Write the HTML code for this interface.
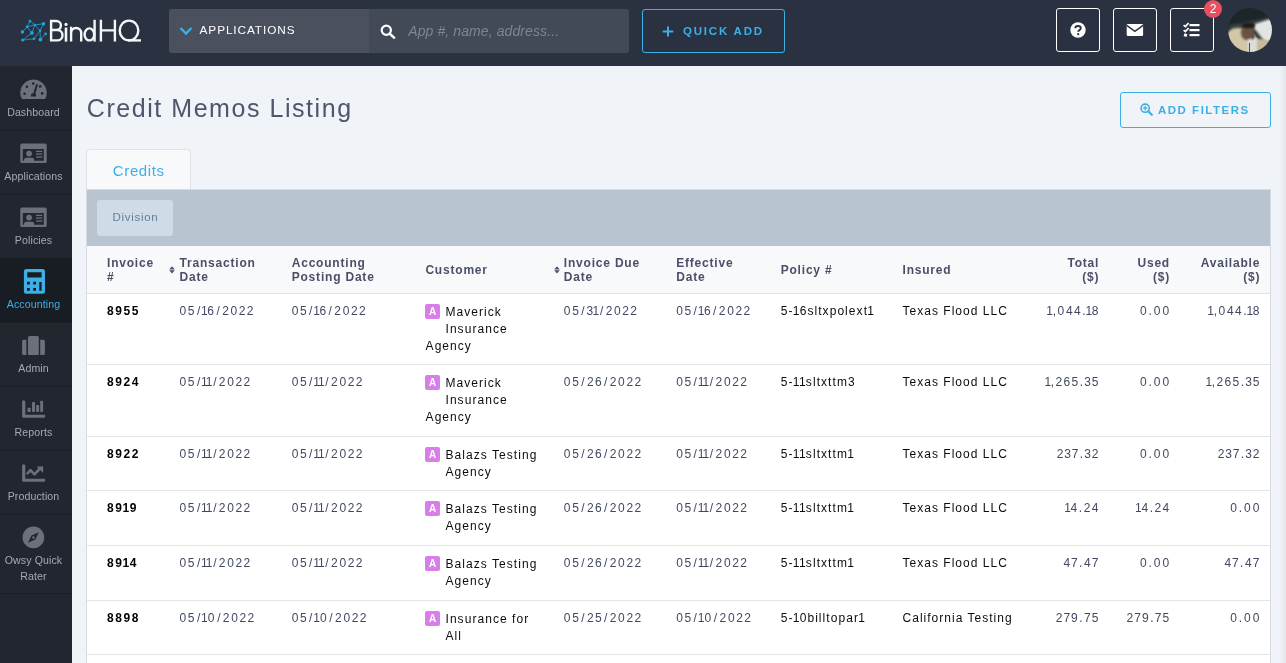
<!DOCTYPE html>
<html><head><meta charset="utf-8">
<style>
*{box-sizing:border-box;margin:0;padding:0}
html,body{width:1286px;height:663px;overflow:hidden;background:#f0f3f7;font-family:"Liberation Sans",sans-serif}
.abs{position:absolute}
.t{position:absolute;white-space:nowrap}
body{will-change:transform}
#hdr{position:absolute;left:0;top:0;width:1286px;height:66px;background:#2a3241}
#side{position:absolute;left:0;top:66px;width:72px;height:597px;background:#22272f}
</style></head><body>
<div id="hdr">
  <svg class="abs" style="left:0;top:0" width="60" height="50" viewBox="0 0 60 50">
    <g stroke="#1fa3dc" stroke-width="0.8" fill="none">
      <path d="M30 21.1 L34.9 24.9 M30 21.1 L27.1 26.8 M34.9 24.9 L43.5 23.8 M27.1 26.8 L34.9 24.9 M27.1 26.8 L22.4 32 M27.1 26.8 L31.9 32.9 M34.9 24.9 L31.9 32.9 M34.9 24.9 L40 30.8 M43.5 23.8 L40 30.8 M40 30.8 L34 38.8 M40 30.8 L40.4 39.6 M40.4 39.6 L45.6 33.9 M31.9 32.9 L22.6 40.1 M22.6 40.1 L34 38.8"/>
    </g>
    <g fill="#1fa3dc">
      <circle cx="30" cy="21.1" r="1.4"/><circle cx="43.5" cy="23.8" r="1.7"/><circle cx="34.9" cy="24.9" r="1.2"/>
      <circle cx="27.1" cy="26.8" r="1.4"/><circle cx="22.4" cy="32" r="1.7"/><circle cx="31.9" cy="32.9" r="1.9"/>
      <circle cx="40" cy="30.8" r="1.3"/><circle cx="45.6" cy="33.9" r="1.3"/><circle cx="22.6" cy="40.1" r="1.5"/>
      <circle cx="34" cy="38.8" r="1.3"/><circle cx="40.4" cy="39.6" r="1.9"/>
    </g>
  </svg>
  <svg class="abs" style="left:0;top:0" width="150" height="50" viewBox="0 0 150 50"><g stroke="#f4f6f8" stroke-width="2.4" fill="none">
<path d="M51.1 19.8 V41.6 M51.1 21 H56.4 A4.5 4.5 0 0 1 56.4 30 H51.1 M51.1 30 H57.3 A5.2 5.2 0 0 1 57.3 40.4 H50"/>
<path d="M66 27.6 V41.6" stroke-width="2.6"/>
<path d="M71.1 26.8 V41.6 M71.1 33 A5.05 5.05 0 0 1 81.2 33 V41.6"/>
<path d="M94.6 19.8 V41.6"/><ellipse cx="89.4" cy="34.4" rx="4.8" ry="6"/>
<path d="M100.9 19.8 V41.6 M114.9 19.8 V41.6 M100.9 30.4 H114.9"/>
<ellipse cx="129" cy="30.5" rx="9.3" ry="9.9"/><path d="M128 40.4 H141"/>
</g><circle cx="66" cy="24.4" r="1.6" fill="#f4f6f8"/></svg>
  <div class="abs" style="left:169px;top:9px;width:460px;height:44px;border-radius:3px;background:#434a57;overflow:hidden">
    <div class="abs" style="left:0;top:0;width:200px;height:44px;background:#4a505e"></div>
  </div>
  <svg class="abs" style="left:179px;top:26px" width="14" height="10" viewBox="0 0 14 10"><path d="M1.5 2 L7 7.5 L12.5 2" stroke="#3cb0e6" stroke-width="2.4" fill="none"/></svg>
  <div class="t" style="left:199.6px;top:25px;font-size:11.8px;line-height:11.8px;color:#fff;letter-spacing:0.9px">APPLICATIONS</div>
  <svg class="abs" style="left:380px;top:24px" width="16" height="15" viewBox="0 0 16 15"><circle cx="6.3" cy="6.3" r="4.6" stroke="#fff" stroke-width="2.2" fill="none"/><path d="M9.6 9.6 L14 13.6" stroke="#fff" stroke-width="2.6" stroke-linecap="round"/></svg>
  <div class="t" style="left:408.2px;top:23.5px;font-size:14px;line-height:14px;color:#7f8692;font-style:italic;letter-spacing:0.1px">App #, name, address...</div>
  <div class="abs" style="left:642px;top:9px;width:143px;height:44px;border:1px solid #3cb0e6;border-radius:3px"></div>
  <svg class="abs" style="left:662px;top:26px" width="12" height="11" viewBox="0 0 12 11"><path d="M6 0.5 V10.5 M0.8 5.5 H11.2" stroke="#3cb0e6" stroke-width="2"/></svg>
  <div class="t" style="left:683px;top:26px;font-size:11.5px;line-height:11.5px;font-weight:bold;color:#3cb0e6;letter-spacing:1.8px">QUICK ADD</div>
  <div class="abs" style="left:1056px;top:8px;width:44px;height:44px;border:1.5px solid #fff;border-radius:3px"></div>
  <div class="abs" style="left:1113px;top:8px;width:44px;height:44px;border:1.5px solid #fff;border-radius:3px"></div>
  <div class="abs" style="left:1170px;top:8px;width:44px;height:44px;border:1.5px solid #fff;border-radius:3px"></div>
  <svg class="abs" style="left:1070px;top:22px" width="16" height="16" viewBox="0 0 16 16"><circle cx="8" cy="8" r="7.7" fill="#fff"/><path d="M5.3 6.2 C5.3 3.2 10.8 3.2 10.8 6.2 C10.8 8 8.2 8.2 8.2 9.8" stroke="#2a3241" stroke-width="1.9" fill="none"/><circle cx="8.2" cy="12.2" r="1.1" fill="#2a3241"/></svg>
  <svg class="abs" style="left:1126px;top:23px" width="18" height="14" viewBox="0 0 18 14"><rect x="0.7" y="1" width="16.4" height="12" rx="1.2" fill="#fff"/><path d="M0.7 2.3 L8.9 8.4 L17.1 2.3" stroke="#2a3241" stroke-width="1.5" fill="none"/></svg>
  <svg class="abs" style="left:1183px;top:22px" width="18" height="16" viewBox="0 0 18 16"><path d="M0.6 3.1 L2.4 4.6 L5.6 1 M0.6 8.1 L2.4 9.6 L5.6 6" stroke="#fff" stroke-width="1.8" fill="none"/><rect x="1" y="11.6" width="3" height="3" fill="#fff" transform="rotate(20 2.5 13)"/><rect x="6.5" y="2" width="10" height="2.2" fill="#fff"/><rect x="6.5" y="7" width="10" height="2.2" fill="#fff"/><rect x="6.5" y="12" width="10" height="2.2" fill="#fff"/></svg>
  <div class="abs" style="left:1204px;top:0px;width:18.4px;height:18.4px;border-radius:50%;background:#e8505f"></div>
  <div class="t" style="left:1204px;top:3px;width:18px;text-align:center;font-size:12px;line-height:12px;color:#fff">2</div>
  <div class="abs" style="left:1227.5px;top:8.2px;width:44px;height:44px;border-radius:50%;overflow:hidden;background:#263134">
    <div class="abs" style="left:-4px;top:-2px;width:52px;height:18px;background:#1c2528;filter:blur(1.5px)"></div>
    <div class="abs" style="left:2px;top:13px;width:44px;height:5px;background:#3a4445;transform:rotate(-12deg);filter:blur(1.2px)"></div>
    <div class="abs" style="left:26px;top:13px;width:20px;height:22px;background:#e2e6e2;transform:skewY(-18deg);filter:blur(1px)"></div>
    <div class="abs" style="left:30px;top:20px;width:4px;height:22px;background:#2f3535;transform:rotate(-38deg);filter:blur(0.8px)"></div>
    <div class="abs" style="left:-3px;top:20px;width:26px;height:28px;border-radius:45% 35% 0 0;background:#d2c7a8;filter:blur(1.2px)"></div>
    <div class="abs" style="left:13.5px;top:17px;width:12.5px;height:15px;border-radius:45%;background:#6a5243;filter:blur(1px)"></div>
    <div class="abs" style="left:14px;top:15px;width:13px;height:5px;border-radius:40%;background:#1d1a19;filter:blur(0.8px)"></div>
    <div class="abs" style="left:24px;top:31px;width:18px;height:16px;border-radius:35% 45% 0 0;background:#c8bb9a;filter:blur(1px)"></div>
    <div class="abs" style="left:20px;top:31px;width:9px;height:15px;background:#dcddd8;filter:blur(0.9px)"></div>
    <div class="abs" style="left:21px;top:35px;width:1.6px;height:12px;background:#4a4a46;filter:blur(0.7px)"></div>
  </div>
</div>

<div id="side">
<div class="abs" style="left:0;top:0px;width:72px;height:65px;background:transparent;border-bottom:1px solid #1a1e25"></div>
<div class="abs" style="left:0;top:64px;width:72px;height:65px;background:transparent;border-bottom:1px solid #1a1e25"></div>
<div class="abs" style="left:0;top:128px;width:72px;height:65px;background:transparent;border-bottom:1px solid #1a1e25"></div>
<div class="abs" style="left:0;top:192px;width:72px;height:65px;background:#181c23;border-bottom:1px solid #1a1e25"></div>
<div class="abs" style="left:0;top:256px;width:72px;height:65px;background:transparent;border-bottom:1px solid #1a1e25"></div>
<div class="abs" style="left:0;top:320px;width:72px;height:65px;background:transparent;border-bottom:1px solid #1a1e25"></div>
<div class="abs" style="left:0;top:384px;width:72px;height:65px;background:transparent;border-bottom:1px solid #1a1e25"></div>
<div class="abs" style="left:0;top:448px;width:72px;height:80px;background:transparent;border-bottom:1px solid #1a1e25"></div>
</div>
<div class="t" style="top:107.45px;font-size:10.6px;line-height:10.6px;color:#a6aab0;letter-spacing:0.1px;left:0.00px;width:67px;text-align:center;">Dashboard</div>
<div class="t" style="top:171.45px;font-size:10.6px;line-height:10.6px;color:#a6aab0;letter-spacing:0.1px;left:0.00px;width:67px;text-align:center;">Applications</div>
<div class="t" style="top:235.45px;font-size:10.6px;line-height:10.6px;color:#a6aab0;letter-spacing:0.1px;left:0.00px;width:67px;text-align:center;">Policies</div>
<div class="t" style="top:299.45px;font-size:10.6px;line-height:10.6px;color:#3cb0e6;letter-spacing:0.1px;left:0.00px;width:67px;text-align:center;">Accounting</div>
<div class="t" style="top:363.45px;font-size:10.6px;line-height:10.6px;color:#a6aab0;letter-spacing:0.1px;left:0.00px;width:67px;text-align:center;">Admin</div>
<div class="t" style="top:427.45px;font-size:10.6px;line-height:10.6px;color:#a6aab0;letter-spacing:0.1px;left:0.00px;width:67px;text-align:center;">Reports</div>
<div class="t" style="top:491.45px;font-size:10.6px;line-height:10.6px;color:#a6aab0;letter-spacing:0.1px;left:0.00px;width:67px;text-align:center;">Production</div>
<div class="t" style="top:555.45px;font-size:10.6px;line-height:10.6px;color:#a6aab0;letter-spacing:0.1px;left:0.00px;width:67px;text-align:center;">Owsy Quick</div>
<div class="t" style="top:570.95px;font-size:10.6px;line-height:10.6px;color:#a6aab0;letter-spacing:0.1px;left:0.00px;width:67px;text-align:center;">Rater</div>
<svg class="abs" style="left:0;top:0" width="72" height="600" viewBox="0 0 72 600">
 <g fill="#6b7079">
  <!-- dashboard gauge -->
  <path d="M21.9 99.1 A13.25 13.25 0 1 1 45.1 99.1 Z"/>
  <!-- applications card -->
  <path fill-rule="evenodd" d="M21.8 143.6 H45.2 A1.5 1.5 0 0 1 46.7 145.1 V161.6 A1.5 1.5 0 0 1 45.2 163.1 H21.8 A1.5 1.5 0 0 1 20.3 161.6 V145.1 A1.5 1.5 0 0 1 21.8 143.6 Z M22.8 148.9 V160.8 H43.8 V148.9 Z"/>
  <circle cx="29.1" cy="153.6" r="2.9"/>
  <path d="M24.1 161 V159.8 A2 2 0 0 1 26.1 157.8 H32.1 A2 2 0 0 1 34.1 159.8 V161 Z"/>
  <rect x="36.1" y="150.7" width="6.1" height="1.3"/><rect x="36.1" y="153.4" width="6.1" height="1.3"/><rect x="36.1" y="156.4" width="6.1" height="1.3"/>
  <!-- policies card -->
  <g transform="translate(0 64)">
  <path fill-rule="evenodd" d="M21.8 143.6 H45.2 A1.5 1.5 0 0 1 46.7 145.1 V161.6 A1.5 1.5 0 0 1 45.2 163.1 H21.8 A1.5 1.5 0 0 1 20.3 161.6 V145.1 A1.5 1.5 0 0 1 21.8 143.6 Z M22.8 148.9 V160.8 H43.8 V148.9 Z"/>
  <circle cx="29.1" cy="153.6" r="2.9"/>
  <path d="M24.1 161 V159.8 A2 2 0 0 1 26.1 157.8 H32.1 A2 2 0 0 1 34.1 159.8 V161 Z"/>
  <rect x="36.1" y="150.7" width="6.1" height="1.3"/><rect x="36.1" y="153.4" width="6.1" height="1.3"/><rect x="36.1" y="156.4" width="6.1" height="1.3"/>
  </g>
  <!-- admin -->
  <path d="M29.5 335.9 H37.3 A1.5 1.5 0 0 1 38.8 337.4 V354.9 H28 V337.4 A1.5 1.5 0 0 1 29.5 335.9 Z"/>
  <path d="M23.6 339.7 H26.4 V354.9 H23.6 A1.5 1.5 0 0 1 22.1 353.4 V341.2 A1.5 1.5 0 0 1 23.6 339.7 Z"/>
  <path d="M40.2 339.7 H43.4 A1.5 1.5 0 0 1 44.9 341.2 V353.4 A1.5 1.5 0 0 1 43.4 354.9 H40.2 Z"/>
  <!-- reports -->
  <path d="M22.1 401.8 A1 1 0 0 1 25.3 401.8 V414.8 H43.9 A1.45 1.45 0 0 1 43.9 417.7 H23.6 A1.5 1.5 0 0 1 22.1 416.2 Z"/>
  <rect x="27.5" y="407.8" width="3.2" height="4.3" rx="0.8"/>
  <rect x="32" y="402.1" width="3" height="10" rx="0.8"/>
  <rect x="36.1" y="404.9" width="3" height="7.2" rx="0.8"/>
  <rect x="40.2" y="400.8" width="2.9" height="11.3" rx="0.8"/>
  <!-- production -->
  <path d="M22.1 465.8 A1 1 0 0 1 25.3 465.8 V478.8 H43.9 A1.45 1.45 0 0 1 43.9 481.7 H23.6 A1.5 1.5 0 0 1 22.1 480.2 Z"/>
  <path d="M27.5 473.4 L30.5 470.2 L34.5 474.4 L40 468.5" stroke="#6b7079" stroke-width="2.6" fill="none" stroke-linecap="round" stroke-linejoin="round"/>
  <path d="M36.6 466.6 H43.1 V472.9 Z"/>
  <!-- compass -->
  <circle cx="33.4" cy="537.4" r="10.85"/>
 </g>
 <!-- gauge details -->
 <g fill="#22272f">
  <circle cx="24.6" cy="93.7" r="1.3"/><circle cx="26.9" cy="86.7" r="1.3"/><circle cx="33.2" cy="83.5" r="1.3"/><circle cx="40.2" cy="86.4" r="1.3"/><circle cx="42.2" cy="93.4" r="1.3"/>
  <path d="M36.2 84 L38 84.6 L35.4 93.6 A2.6 2.6 0 0 1 36 95.3 V96.4 H30.9 V95.3 A2.5 2.5 0 0 1 33.3 93.2 Z"/>
  <path d="M38.8 532.2 L35.3 539.4 L28 542.8 L31.5 535.6 Z"/>
 </g>
 <circle cx="33.4" cy="537.5" r="1.2" fill="#6b7079"/>
 <!-- calculator -->
 <g fill="#3cb0e6">
  <path fill-rule="evenodd" d="M26.4 268.9 H42.5 A2.5 2.5 0 0 1 45 271.4 V291.3 A2.5 2.5 0 0 1 42.5 293.8 H26.4 A2.5 2.5 0 0 1 23.9 291.3 V271.4 A2.5 2.5 0 0 1 26.4 268.9 Z M27.3 272.3 V277.6 H41.6 V272.3 Z M27 281.7 V284.6 H29.8 V281.7 Z M33.2 281.7 V284.6 H36 V281.7 Z M27 287.9 V290.7 H29.8 V287.9 Z M33.2 287.9 V290.7 H36 V287.9 Z M39.3 282 V290.7 H41.6 V282 Z"/>
 </g>
</svg>

<div class="t" style="top:96.16px;font-size:25px;line-height:25px;color:#4e556d;letter-spacing:1.55px;left:86.80px;">Credit Memos Listing</div>
<div class="abs" style="left:1120px;top:92px;width:151px;height:36px;border:1px solid #3cb0e6;border-radius:3px"></div>
<svg class="abs" style="left:1140px;top:103px" width="13" height="13" viewBox="0 0 13 13"><circle cx="5.2" cy="5.2" r="4.1" stroke="#3cb0e6" stroke-width="1.6" fill="none"/><path d="M8.2 8.2 L11.8 11.8" stroke="#3cb0e6" stroke-width="2.2" stroke-linecap="round"/><path d="M5.2 3 V7.4 M3 5.2 H7.4" stroke="#3cb0e6" stroke-width="1.3"/></svg>
<div class="t" style="top:104.55px;font-size:11.5px;line-height:11.5px;color:#3cb0e6;font-weight:bold;letter-spacing:1.5px;left:1158.00px;">ADD FILTERS</div>
<div class="abs" style="left:86px;top:149px;width:105px;height:40px;border:1px solid #dfe3e8;border-bottom:none;border-radius:4px 4px 0 0;background:#f8f9fb"></div>
<div class="t" style="top:162.64px;font-size:15px;line-height:15px;color:#3cb0e6;letter-spacing:0.63px;left:112.80px;">Credits</div>
<div class="abs" style="left:86px;top:190px;width:1185px;height:480px;border-left:1px solid #d5dbe2;border-right:1px solid #d5dbe2;background:#fff"></div>
<div class="abs" style="left:87px;top:190px;width:1183px;height:56px;background:#b8c4cf"></div>
<div class="abs" style="left:86px;top:189px;width:1185px;height:1px;background:#d6dce2"></div>
<div class="abs" style="left:97px;top:200px;width:76px;height:36px;background:#cfdbe7;border-radius:3px"></div>
<div class="t" style="top:211.65px;font-size:11.5px;line-height:11.5px;color:#62809a;letter-spacing:0.7px;left:112.60px;">Division</div>
<div class="abs" style="left:87px;top:246px;width:1183px;height:48px;background:#f8f9fb;border-bottom:1px solid #dde3ea"></div>
<div class="t" style="top:256.89px;font-size:12px;line-height:12px;color:#4a5068;font-weight:bold;letter-spacing:0.8px;left:107.00px;">Invoice</div>
<div class="t" style="top:271.49px;font-size:12px;line-height:12px;color:#4a5068;font-weight:bold;letter-spacing:0.8px;left:107.00px;">#</div>
<div class="t" style="top:256.89px;font-size:12px;line-height:12px;color:#4a5068;font-weight:bold;letter-spacing:0.8px;left:179.50px;">Transaction</div>
<div class="t" style="top:271.49px;font-size:12px;line-height:12px;color:#4a5068;font-weight:bold;letter-spacing:0.8px;left:179.50px;">Date</div>
<div class="t" style="top:256.89px;font-size:12px;line-height:12px;color:#4a5068;font-weight:bold;letter-spacing:0.8px;left:291.70px;">Accounting</div>
<div class="t" style="top:271.49px;font-size:12px;line-height:12px;color:#4a5068;font-weight:bold;letter-spacing:0.8px;left:291.70px;">Posting Date</div>
<div class="t" style="top:264.19px;font-size:12px;line-height:12px;color:#4a5068;font-weight:bold;letter-spacing:0.8px;left:425.40px;">Customer</div>
<div class="t" style="top:256.89px;font-size:12px;line-height:12px;color:#4a5068;font-weight:bold;letter-spacing:0.8px;left:563.80px;">Invoice Due</div>
<div class="t" style="top:271.49px;font-size:12px;line-height:12px;color:#4a5068;font-weight:bold;letter-spacing:0.8px;left:563.80px;">Date</div>
<div class="t" style="top:256.89px;font-size:12px;line-height:12px;color:#4a5068;font-weight:bold;letter-spacing:0.8px;left:676.20px;">Effective</div>
<div class="t" style="top:271.49px;font-size:12px;line-height:12px;color:#4a5068;font-weight:bold;letter-spacing:0.8px;left:676.20px;">Date</div>
<div class="t" style="top:264.19px;font-size:12px;line-height:12px;color:#4a5068;font-weight:bold;letter-spacing:0.8px;left:780.70px;">Policy #</div>
<div class="t" style="top:264.19px;font-size:12px;line-height:12px;color:#4a5068;font-weight:bold;letter-spacing:0.8px;left:902.50px;">Insured</div>
<div class="t" style="top:256.89px;font-size:12px;line-height:12px;color:#4a5068;font-weight:bold;letter-spacing:0.8px;right:186.80px;text-align:right;">Total</div>
<div class="t" style="top:271.49px;font-size:12px;line-height:12px;color:#4a5068;font-weight:bold;letter-spacing:0.8px;right:186.80px;text-align:right;">($)</div>
<div class="t" style="top:256.89px;font-size:12px;line-height:12px;color:#4a5068;font-weight:bold;letter-spacing:0.8px;right:116.00px;text-align:right;">Used</div>
<div class="t" style="top:271.49px;font-size:12px;line-height:12px;color:#4a5068;font-weight:bold;letter-spacing:0.8px;right:116.00px;text-align:right;">($)</div>
<div class="t" style="top:256.89px;font-size:12px;line-height:12px;color:#4a5068;font-weight:bold;letter-spacing:0.8px;right:25.80px;text-align:right;">Available</div>
<div class="t" style="top:271.49px;font-size:12px;line-height:12px;color:#4a5068;font-weight:bold;letter-spacing:0.8px;right:25.80px;text-align:right;">($)</div>
<svg class="abs" style="left:169px;top:266px" width="6" height="9" viewBox="0 0 6 9"><path d="M0.2 3.5 L3 0.2 L5.8 3.5 Z M0.2 4.3 L3 7.6 L5.8 4.3 Z" fill="#4a5068"/></svg>
<svg class="abs" style="left:554.4px;top:266px" width="6" height="9" viewBox="0 0 6 9"><path d="M0.2 3.5 L3 0.2 L5.8 3.5 Z M0.2 4.3 L3 7.6 L5.8 4.3 Z" fill="#4a5068"/></svg>
<div class="abs" style="left:87px;top:364.0px;width:1183px;height:1px;background:#e1e6ec"></div>
<div class="t" style="top:305.19px;font-size:12px;line-height:12px;color:#000;font-weight:bold;left:107.00px;"><span style="letter-spacing:1.60px">8</span><span style="letter-spacing:1.60px">9</span><span style="letter-spacing:1.60px">5</span><span style="letter-spacing:0.00px">5</span></div>
<div class="t" style="top:305.19px;font-size:12px;line-height:12px;color:#414862;left:179.50px;"><span style="letter-spacing:1.65px">0</span><span style="letter-spacing:2.40px">5</span><span style="letter-spacing:0.75px">/</span><span style="letter-spacing:-0.35px">1</span><span style="letter-spacing:2.40px">6</span><span style="letter-spacing:2.40px">/</span><span style="letter-spacing:1.65px">2</span><span style="letter-spacing:1.65px">0</span><span style="letter-spacing:1.30px">2</span><span style="letter-spacing:0.00px">2</span></div>
<div class="t" style="top:305.19px;font-size:12px;line-height:12px;color:#414862;left:291.70px;"><span style="letter-spacing:1.65px">0</span><span style="letter-spacing:2.40px">5</span><span style="letter-spacing:0.75px">/</span><span style="letter-spacing:-0.35px">1</span><span style="letter-spacing:2.40px">6</span><span style="letter-spacing:2.40px">/</span><span style="letter-spacing:1.65px">2</span><span style="letter-spacing:1.65px">0</span><span style="letter-spacing:1.30px">2</span><span style="letter-spacing:0.00px">2</span></div>
<div class="abs" style="left:425px;top:303.80px;width:15px;height:15px;border-radius:2px;background:#d77ee8"></div>
<div class="t" style="top:306.73px;font-size:10px;line-height:10px;color:#fff;font-weight:bold;left:425.00px;width:15px;text-align:center;">A</div>
<div class="t" style="top:306.09px;font-size:12px;line-height:12px;color:#0c0c0c;letter-spacing:1.05px;left:445.50px;">Maverick</div>
<div class="t" style="top:323.19px;font-size:12px;line-height:12px;color:#0c0c0c;letter-spacing:1.05px;left:445.50px;">Insurance</div>
<div class="t" style="top:340.29px;font-size:12px;line-height:12px;color:#0c0c0c;letter-spacing:1.05px;left:425.60px;">Agency</div>
<div class="t" style="top:305.19px;font-size:12px;line-height:12px;color:#414862;left:563.80px;"><span style="letter-spacing:1.65px">0</span><span style="letter-spacing:2.40px">5</span><span style="letter-spacing:2.00px">/</span><span style="letter-spacing:-0.75px">3</span><span style="letter-spacing:0.75px">1</span><span style="letter-spacing:2.40px">/</span><span style="letter-spacing:1.65px">2</span><span style="letter-spacing:1.65px">0</span><span style="letter-spacing:1.30px">2</span><span style="letter-spacing:0.00px">2</span></div>
<div class="t" style="top:305.19px;font-size:12px;line-height:12px;color:#414862;left:676.20px;"><span style="letter-spacing:1.65px">0</span><span style="letter-spacing:2.40px">5</span><span style="letter-spacing:0.75px">/</span><span style="letter-spacing:-0.35px">1</span><span style="letter-spacing:2.40px">6</span><span style="letter-spacing:2.40px">/</span><span style="letter-spacing:1.65px">2</span><span style="letter-spacing:1.65px">0</span><span style="letter-spacing:1.30px">2</span><span style="letter-spacing:0.00px">2</span></div>
<div class="t" style="top:305.19px;font-size:12px;line-height:12px;color:#0c0c0c;left:780.70px;"><span style="letter-spacing:1.05px">5</span><span style="letter-spacing:0.28px">-</span><span style="letter-spacing:0.28px">1</span><span style="letter-spacing:1.05px">6</span><span style="letter-spacing:1.05px">s</span><span style="letter-spacing:1.05px">l</span><span style="letter-spacing:1.05px">t</span><span style="letter-spacing:1.05px">x</span><span style="letter-spacing:1.05px">p</span><span style="letter-spacing:1.05px">o</span><span style="letter-spacing:1.05px">l</span><span style="letter-spacing:1.05px">e</span><span style="letter-spacing:1.05px">x</span><span style="letter-spacing:0.28px">t</span><span style="letter-spacing:0.00px">1</span></div>
<div class="t" style="top:305.19px;font-size:12px;line-height:12px;color:#0c0c0c;letter-spacing:1.02px;left:902.50px;">Texas Flood LLC</div>
<div class="t" style="top:305.19px;font-size:12px;line-height:12px;color:#414862;right:187.60px;text-align:right;"><span style="letter-spacing:-0.35px">1</span><span style="letter-spacing:1.65px">,</span><span style="letter-spacing:1.65px">0</span><span style="letter-spacing:1.30px">4</span><span style="letter-spacing:1.55px">4</span><span style="letter-spacing:-0.10px">.</span><span style="letter-spacing:-0.35px">1</span><span style="letter-spacing:0.00px">8</span></div>
<div class="t" style="top:305.19px;font-size:12px;line-height:12px;color:#414862;right:116.80px;text-align:right;"><span style="letter-spacing:1.90px">0</span><span style="letter-spacing:1.90px">.</span><span style="letter-spacing:2.00px">0</span><span style="letter-spacing:0.00px">0</span></div>
<div class="t" style="top:305.19px;font-size:12px;line-height:12px;color:#414862;right:26.60px;text-align:right;"><span style="letter-spacing:-0.35px">1</span><span style="letter-spacing:1.65px">,</span><span style="letter-spacing:1.65px">0</span><span style="letter-spacing:1.30px">4</span><span style="letter-spacing:1.55px">4</span><span style="letter-spacing:-0.10px">.</span><span style="letter-spacing:-0.35px">1</span><span style="letter-spacing:0.00px">8</span></div>
<div class="abs" style="left:87px;top:436.0px;width:1183px;height:1px;background:#e1e6ec"></div>
<div class="t" style="top:376.19px;font-size:12px;line-height:12px;color:#000;font-weight:bold;left:107.00px;"><span style="letter-spacing:1.60px">8</span><span style="letter-spacing:1.60px">9</span><span style="letter-spacing:1.60px">2</span><span style="letter-spacing:0.00px">4</span></div>
<div class="t" style="top:376.19px;font-size:12px;line-height:12px;color:#414862;left:179.50px;"><span style="letter-spacing:1.65px">0</span><span style="letter-spacing:2.40px">5</span><span style="letter-spacing:0.75px">/</span><span style="letter-spacing:-2.00px">1</span><span style="letter-spacing:0.75px">1</span><span style="letter-spacing:2.40px">/</span><span style="letter-spacing:1.65px">2</span><span style="letter-spacing:1.65px">0</span><span style="letter-spacing:1.30px">2</span><span style="letter-spacing:0.00px">2</span></div>
<div class="t" style="top:376.19px;font-size:12px;line-height:12px;color:#414862;left:291.70px;"><span style="letter-spacing:1.65px">0</span><span style="letter-spacing:2.40px">5</span><span style="letter-spacing:0.75px">/</span><span style="letter-spacing:-2.00px">1</span><span style="letter-spacing:0.75px">1</span><span style="letter-spacing:2.40px">/</span><span style="letter-spacing:1.65px">2</span><span style="letter-spacing:1.65px">0</span><span style="letter-spacing:1.30px">2</span><span style="letter-spacing:0.00px">2</span></div>
<div class="abs" style="left:425px;top:374.80px;width:15px;height:15px;border-radius:2px;background:#d77ee8"></div>
<div class="t" style="top:377.73px;font-size:10px;line-height:10px;color:#fff;font-weight:bold;left:425.00px;width:15px;text-align:center;">A</div>
<div class="t" style="top:377.09px;font-size:12px;line-height:12px;color:#0c0c0c;letter-spacing:1.05px;left:445.50px;">Maverick</div>
<div class="t" style="top:394.19px;font-size:12px;line-height:12px;color:#0c0c0c;letter-spacing:1.05px;left:445.50px;">Insurance</div>
<div class="t" style="top:411.29px;font-size:12px;line-height:12px;color:#0c0c0c;letter-spacing:1.05px;left:425.60px;">Agency</div>
<div class="t" style="top:376.19px;font-size:12px;line-height:12px;color:#414862;left:563.80px;"><span style="letter-spacing:1.65px">0</span><span style="letter-spacing:2.40px">5</span><span style="letter-spacing:2.40px">/</span><span style="letter-spacing:1.30px">2</span><span style="letter-spacing:2.40px">6</span><span style="letter-spacing:2.40px">/</span><span style="letter-spacing:1.65px">2</span><span style="letter-spacing:1.65px">0</span><span style="letter-spacing:1.30px">2</span><span style="letter-spacing:0.00px">2</span></div>
<div class="t" style="top:376.19px;font-size:12px;line-height:12px;color:#414862;left:676.20px;"><span style="letter-spacing:1.65px">0</span><span style="letter-spacing:2.40px">5</span><span style="letter-spacing:0.75px">/</span><span style="letter-spacing:-2.00px">1</span><span style="letter-spacing:0.75px">1</span><span style="letter-spacing:2.40px">/</span><span style="letter-spacing:1.65px">2</span><span style="letter-spacing:1.65px">0</span><span style="letter-spacing:1.30px">2</span><span style="letter-spacing:0.00px">2</span></div>
<div class="t" style="top:376.19px;font-size:12px;line-height:12px;color:#0c0c0c;left:780.70px;"><span style="letter-spacing:1.05px">5</span><span style="letter-spacing:0.28px">-</span><span style="letter-spacing:-0.50px">1</span><span style="letter-spacing:0.28px">1</span><span style="letter-spacing:1.05px">s</span><span style="letter-spacing:1.05px">l</span><span style="letter-spacing:1.05px">t</span><span style="letter-spacing:1.05px">x</span><span style="letter-spacing:1.05px">t</span><span style="letter-spacing:1.05px">t</span><span style="letter-spacing:1.05px">m</span><span style="letter-spacing:0.00px">3</span></div>
<div class="t" style="top:376.19px;font-size:12px;line-height:12px;color:#0c0c0c;letter-spacing:1.02px;left:902.50px;">Texas Flood LLC</div>
<div class="t" style="top:376.19px;font-size:12px;line-height:12px;color:#414862;right:187.60px;text-align:right;"><span style="letter-spacing:-0.35px">1</span><span style="letter-spacing:1.30px">,</span><span style="letter-spacing:1.30px">2</span><span style="letter-spacing:1.30px">6</span><span style="letter-spacing:1.55px">5</span><span style="letter-spacing:1.15px">.</span><span style="letter-spacing:0.90px">3</span><span style="letter-spacing:0.00px">5</span></div>
<div class="t" style="top:376.19px;font-size:12px;line-height:12px;color:#414862;right:116.80px;text-align:right;"><span style="letter-spacing:1.90px">0</span><span style="letter-spacing:1.90px">.</span><span style="letter-spacing:2.00px">0</span><span style="letter-spacing:0.00px">0</span></div>
<div class="t" style="top:376.19px;font-size:12px;line-height:12px;color:#414862;right:26.60px;text-align:right;"><span style="letter-spacing:-0.35px">1</span><span style="letter-spacing:1.30px">,</span><span style="letter-spacing:1.30px">2</span><span style="letter-spacing:1.30px">6</span><span style="letter-spacing:1.55px">5</span><span style="letter-spacing:1.15px">.</span><span style="letter-spacing:0.90px">3</span><span style="letter-spacing:0.00px">5</span></div>
<div class="abs" style="left:87px;top:490.0px;width:1183px;height:1px;background:#e1e6ec"></div>
<div class="t" style="top:448.19px;font-size:12px;line-height:12px;color:#000;font-weight:bold;left:107.00px;"><span style="letter-spacing:1.60px">8</span><span style="letter-spacing:1.60px">9</span><span style="letter-spacing:1.60px">2</span><span style="letter-spacing:0.00px">2</span></div>
<div class="t" style="top:448.19px;font-size:12px;line-height:12px;color:#414862;left:179.50px;"><span style="letter-spacing:1.65px">0</span><span style="letter-spacing:2.40px">5</span><span style="letter-spacing:0.75px">/</span><span style="letter-spacing:-2.00px">1</span><span style="letter-spacing:0.75px">1</span><span style="letter-spacing:2.40px">/</span><span style="letter-spacing:1.65px">2</span><span style="letter-spacing:1.65px">0</span><span style="letter-spacing:1.30px">2</span><span style="letter-spacing:0.00px">2</span></div>
<div class="t" style="top:448.19px;font-size:12px;line-height:12px;color:#414862;left:291.70px;"><span style="letter-spacing:1.65px">0</span><span style="letter-spacing:2.40px">5</span><span style="letter-spacing:0.75px">/</span><span style="letter-spacing:-2.00px">1</span><span style="letter-spacing:0.75px">1</span><span style="letter-spacing:2.40px">/</span><span style="letter-spacing:1.65px">2</span><span style="letter-spacing:1.65px">0</span><span style="letter-spacing:1.30px">2</span><span style="letter-spacing:0.00px">2</span></div>
<div class="abs" style="left:425px;top:446.80px;width:15px;height:15px;border-radius:2px;background:#d77ee8"></div>
<div class="t" style="top:449.73px;font-size:10px;line-height:10px;color:#fff;font-weight:bold;left:425.00px;width:15px;text-align:center;">A</div>
<div class="t" style="top:449.09px;font-size:12px;line-height:12px;color:#0c0c0c;letter-spacing:1.05px;left:445.50px;">Balazs Testing</div>
<div class="t" style="top:466.19px;font-size:12px;line-height:12px;color:#0c0c0c;letter-spacing:1.05px;left:445.50px;">Agency</div>
<div class="t" style="top:448.19px;font-size:12px;line-height:12px;color:#414862;left:563.80px;"><span style="letter-spacing:1.65px">0</span><span style="letter-spacing:2.40px">5</span><span style="letter-spacing:2.40px">/</span><span style="letter-spacing:1.30px">2</span><span style="letter-spacing:2.40px">6</span><span style="letter-spacing:2.40px">/</span><span style="letter-spacing:1.65px">2</span><span style="letter-spacing:1.65px">0</span><span style="letter-spacing:1.30px">2</span><span style="letter-spacing:0.00px">2</span></div>
<div class="t" style="top:448.19px;font-size:12px;line-height:12px;color:#414862;left:676.20px;"><span style="letter-spacing:1.65px">0</span><span style="letter-spacing:2.40px">5</span><span style="letter-spacing:0.75px">/</span><span style="letter-spacing:-2.00px">1</span><span style="letter-spacing:0.75px">1</span><span style="letter-spacing:2.40px">/</span><span style="letter-spacing:1.65px">2</span><span style="letter-spacing:1.65px">0</span><span style="letter-spacing:1.30px">2</span><span style="letter-spacing:0.00px">2</span></div>
<div class="t" style="top:448.19px;font-size:12px;line-height:12px;color:#0c0c0c;left:780.70px;"><span style="letter-spacing:1.05px">5</span><span style="letter-spacing:0.28px">-</span><span style="letter-spacing:-0.50px">1</span><span style="letter-spacing:0.28px">1</span><span style="letter-spacing:1.05px">s</span><span style="letter-spacing:1.05px">l</span><span style="letter-spacing:1.05px">t</span><span style="letter-spacing:1.05px">x</span><span style="letter-spacing:1.05px">t</span><span style="letter-spacing:1.05px">t</span><span style="letter-spacing:0.28px">m</span><span style="letter-spacing:0.00px">1</span></div>
<div class="t" style="top:448.19px;font-size:12px;line-height:12px;color:#0c0c0c;letter-spacing:1.02px;left:902.50px;">Texas Flood LLC</div>
<div class="t" style="top:448.19px;font-size:12px;line-height:12px;color:#414862;right:187.60px;text-align:right;"><span style="letter-spacing:0.90px">2</span><span style="letter-spacing:0.65px">3</span><span style="letter-spacing:1.30px">7</span><span style="letter-spacing:1.15px">.</span><span style="letter-spacing:0.90px">3</span><span style="letter-spacing:0.00px">2</span></div>
<div class="t" style="top:448.19px;font-size:12px;line-height:12px;color:#414862;right:116.80px;text-align:right;"><span style="letter-spacing:1.90px">0</span><span style="letter-spacing:1.90px">.</span><span style="letter-spacing:2.00px">0</span><span style="letter-spacing:0.00px">0</span></div>
<div class="t" style="top:448.19px;font-size:12px;line-height:12px;color:#414862;right:26.60px;text-align:right;"><span style="letter-spacing:0.90px">2</span><span style="letter-spacing:0.65px">3</span><span style="letter-spacing:1.30px">7</span><span style="letter-spacing:1.15px">.</span><span style="letter-spacing:0.90px">3</span><span style="letter-spacing:0.00px">2</span></div>
<div class="abs" style="left:87px;top:545.0px;width:1183px;height:1px;background:#e1e6ec"></div>
<div class="t" style="top:502.19px;font-size:12px;line-height:12px;color:#000;font-weight:bold;left:107.00px;"><span style="letter-spacing:1.60px">8</span><span style="letter-spacing:0.55px">9</span><span style="letter-spacing:0.55px">1</span><span style="letter-spacing:0.00px">9</span></div>
<div class="t" style="top:502.19px;font-size:12px;line-height:12px;color:#414862;left:179.50px;"><span style="letter-spacing:1.65px">0</span><span style="letter-spacing:2.40px">5</span><span style="letter-spacing:0.75px">/</span><span style="letter-spacing:-2.00px">1</span><span style="letter-spacing:0.75px">1</span><span style="letter-spacing:2.40px">/</span><span style="letter-spacing:1.65px">2</span><span style="letter-spacing:1.65px">0</span><span style="letter-spacing:1.30px">2</span><span style="letter-spacing:0.00px">2</span></div>
<div class="t" style="top:502.19px;font-size:12px;line-height:12px;color:#414862;left:291.70px;"><span style="letter-spacing:1.65px">0</span><span style="letter-spacing:2.40px">5</span><span style="letter-spacing:0.75px">/</span><span style="letter-spacing:-2.00px">1</span><span style="letter-spacing:0.75px">1</span><span style="letter-spacing:2.40px">/</span><span style="letter-spacing:1.65px">2</span><span style="letter-spacing:1.65px">0</span><span style="letter-spacing:1.30px">2</span><span style="letter-spacing:0.00px">2</span></div>
<div class="abs" style="left:425px;top:500.80px;width:15px;height:15px;border-radius:2px;background:#d77ee8"></div>
<div class="t" style="top:503.73px;font-size:10px;line-height:10px;color:#fff;font-weight:bold;left:425.00px;width:15px;text-align:center;">A</div>
<div class="t" style="top:503.09px;font-size:12px;line-height:12px;color:#0c0c0c;letter-spacing:1.05px;left:445.50px;">Balazs Testing</div>
<div class="t" style="top:520.19px;font-size:12px;line-height:12px;color:#0c0c0c;letter-spacing:1.05px;left:445.50px;">Agency</div>
<div class="t" style="top:502.19px;font-size:12px;line-height:12px;color:#414862;left:563.80px;"><span style="letter-spacing:1.65px">0</span><span style="letter-spacing:2.40px">5</span><span style="letter-spacing:2.40px">/</span><span style="letter-spacing:1.30px">2</span><span style="letter-spacing:2.40px">6</span><span style="letter-spacing:2.40px">/</span><span style="letter-spacing:1.65px">2</span><span style="letter-spacing:1.65px">0</span><span style="letter-spacing:1.30px">2</span><span style="letter-spacing:0.00px">2</span></div>
<div class="t" style="top:502.19px;font-size:12px;line-height:12px;color:#414862;left:676.20px;"><span style="letter-spacing:1.65px">0</span><span style="letter-spacing:2.40px">5</span><span style="letter-spacing:0.75px">/</span><span style="letter-spacing:-2.00px">1</span><span style="letter-spacing:0.75px">1</span><span style="letter-spacing:2.40px">/</span><span style="letter-spacing:1.65px">2</span><span style="letter-spacing:1.65px">0</span><span style="letter-spacing:1.30px">2</span><span style="letter-spacing:0.00px">2</span></div>
<div class="t" style="top:502.19px;font-size:12px;line-height:12px;color:#0c0c0c;left:780.70px;"><span style="letter-spacing:1.05px">5</span><span style="letter-spacing:0.28px">-</span><span style="letter-spacing:-0.50px">1</span><span style="letter-spacing:0.28px">1</span><span style="letter-spacing:1.05px">s</span><span style="letter-spacing:1.05px">l</span><span style="letter-spacing:1.05px">t</span><span style="letter-spacing:1.05px">x</span><span style="letter-spacing:1.05px">t</span><span style="letter-spacing:1.05px">t</span><span style="letter-spacing:0.28px">m</span><span style="letter-spacing:0.00px">1</span></div>
<div class="t" style="top:502.19px;font-size:12px;line-height:12px;color:#0c0c0c;letter-spacing:1.02px;left:902.50px;">Texas Flood LLC</div>
<div class="t" style="top:502.19px;font-size:12px;line-height:12px;color:#414862;right:187.60px;text-align:right;"><span style="letter-spacing:-0.35px">1</span><span style="letter-spacing:1.55px">4</span><span style="letter-spacing:1.55px">.</span><span style="letter-spacing:1.30px">2</span><span style="letter-spacing:0.00px">4</span></div>
<div class="t" style="top:502.19px;font-size:12px;line-height:12px;color:#414862;right:116.80px;text-align:right;"><span style="letter-spacing:-0.35px">1</span><span style="letter-spacing:1.55px">4</span><span style="letter-spacing:1.55px">.</span><span style="letter-spacing:1.30px">2</span><span style="letter-spacing:0.00px">4</span></div>
<div class="t" style="top:502.19px;font-size:12px;line-height:12px;color:#414862;right:26.60px;text-align:right;"><span style="letter-spacing:1.90px">0</span><span style="letter-spacing:1.90px">.</span><span style="letter-spacing:2.00px">0</span><span style="letter-spacing:0.00px">0</span></div>
<div class="abs" style="left:87px;top:600.0px;width:1183px;height:1px;background:#e1e6ec"></div>
<div class="t" style="top:557.19px;font-size:12px;line-height:12px;color:#000;font-weight:bold;left:107.00px;"><span style="letter-spacing:1.60px">8</span><span style="letter-spacing:0.55px">9</span><span style="letter-spacing:0.55px">1</span><span style="letter-spacing:0.00px">4</span></div>
<div class="t" style="top:557.19px;font-size:12px;line-height:12px;color:#414862;left:179.50px;"><span style="letter-spacing:1.65px">0</span><span style="letter-spacing:2.40px">5</span><span style="letter-spacing:0.75px">/</span><span style="letter-spacing:-2.00px">1</span><span style="letter-spacing:0.75px">1</span><span style="letter-spacing:2.40px">/</span><span style="letter-spacing:1.65px">2</span><span style="letter-spacing:1.65px">0</span><span style="letter-spacing:1.30px">2</span><span style="letter-spacing:0.00px">2</span></div>
<div class="t" style="top:557.19px;font-size:12px;line-height:12px;color:#414862;left:291.70px;"><span style="letter-spacing:1.65px">0</span><span style="letter-spacing:2.40px">5</span><span style="letter-spacing:0.75px">/</span><span style="letter-spacing:-2.00px">1</span><span style="letter-spacing:0.75px">1</span><span style="letter-spacing:2.40px">/</span><span style="letter-spacing:1.65px">2</span><span style="letter-spacing:1.65px">0</span><span style="letter-spacing:1.30px">2</span><span style="letter-spacing:0.00px">2</span></div>
<div class="abs" style="left:425px;top:555.80px;width:15px;height:15px;border-radius:2px;background:#d77ee8"></div>
<div class="t" style="top:558.73px;font-size:10px;line-height:10px;color:#fff;font-weight:bold;left:425.00px;width:15px;text-align:center;">A</div>
<div class="t" style="top:558.09px;font-size:12px;line-height:12px;color:#0c0c0c;letter-spacing:1.05px;left:445.50px;">Balazs Testing</div>
<div class="t" style="top:575.19px;font-size:12px;line-height:12px;color:#0c0c0c;letter-spacing:1.05px;left:445.50px;">Agency</div>
<div class="t" style="top:557.19px;font-size:12px;line-height:12px;color:#414862;left:563.80px;"><span style="letter-spacing:1.65px">0</span><span style="letter-spacing:2.40px">5</span><span style="letter-spacing:2.40px">/</span><span style="letter-spacing:1.30px">2</span><span style="letter-spacing:2.40px">6</span><span style="letter-spacing:2.40px">/</span><span style="letter-spacing:1.65px">2</span><span style="letter-spacing:1.65px">0</span><span style="letter-spacing:1.30px">2</span><span style="letter-spacing:0.00px">2</span></div>
<div class="t" style="top:557.19px;font-size:12px;line-height:12px;color:#414862;left:676.20px;"><span style="letter-spacing:1.65px">0</span><span style="letter-spacing:2.40px">5</span><span style="letter-spacing:0.75px">/</span><span style="letter-spacing:-2.00px">1</span><span style="letter-spacing:0.75px">1</span><span style="letter-spacing:2.40px">/</span><span style="letter-spacing:1.65px">2</span><span style="letter-spacing:1.65px">0</span><span style="letter-spacing:1.30px">2</span><span style="letter-spacing:0.00px">2</span></div>
<div class="t" style="top:557.19px;font-size:12px;line-height:12px;color:#0c0c0c;left:780.70px;"><span style="letter-spacing:1.05px">5</span><span style="letter-spacing:0.28px">-</span><span style="letter-spacing:-0.50px">1</span><span style="letter-spacing:0.28px">1</span><span style="letter-spacing:1.05px">s</span><span style="letter-spacing:1.05px">l</span><span style="letter-spacing:1.05px">t</span><span style="letter-spacing:1.05px">x</span><span style="letter-spacing:1.05px">t</span><span style="letter-spacing:1.05px">t</span><span style="letter-spacing:0.28px">m</span><span style="letter-spacing:0.00px">1</span></div>
<div class="t" style="top:557.19px;font-size:12px;line-height:12px;color:#0c0c0c;letter-spacing:1.02px;left:902.50px;">Texas Flood LLC</div>
<div class="t" style="top:557.19px;font-size:12px;line-height:12px;color:#414862;right:187.60px;text-align:right;"><span style="letter-spacing:1.05px">4</span><span style="letter-spacing:1.30px">7</span><span style="letter-spacing:1.55px">.</span><span style="letter-spacing:1.05px">4</span><span style="letter-spacing:0.00px">7</span></div>
<div class="t" style="top:557.19px;font-size:12px;line-height:12px;color:#414862;right:116.80px;text-align:right;"><span style="letter-spacing:1.90px">0</span><span style="letter-spacing:1.90px">.</span><span style="letter-spacing:2.00px">0</span><span style="letter-spacing:0.00px">0</span></div>
<div class="t" style="top:557.19px;font-size:12px;line-height:12px;color:#414862;right:26.60px;text-align:right;"><span style="letter-spacing:1.05px">4</span><span style="letter-spacing:1.30px">7</span><span style="letter-spacing:1.55px">.</span><span style="letter-spacing:1.05px">4</span><span style="letter-spacing:0.00px">7</span></div>
<div class="abs" style="left:87px;top:654.0px;width:1183px;height:1px;background:#e1e6ec"></div>
<div class="t" style="top:612.19px;font-size:12px;line-height:12px;color:#000;font-weight:bold;left:107.00px;"><span style="letter-spacing:1.60px">8</span><span style="letter-spacing:1.60px">8</span><span style="letter-spacing:1.60px">9</span><span style="letter-spacing:0.00px">8</span></div>
<div class="t" style="top:612.19px;font-size:12px;line-height:12px;color:#414862;left:179.50px;"><span style="letter-spacing:1.65px">0</span><span style="letter-spacing:2.40px">5</span><span style="letter-spacing:0.75px">/</span><span style="letter-spacing:0.00px">1</span><span style="letter-spacing:2.75px">0</span><span style="letter-spacing:2.40px">/</span><span style="letter-spacing:1.65px">2</span><span style="letter-spacing:1.65px">0</span><span style="letter-spacing:1.30px">2</span><span style="letter-spacing:0.00px">2</span></div>
<div class="t" style="top:612.19px;font-size:12px;line-height:12px;color:#414862;left:291.70px;"><span style="letter-spacing:1.65px">0</span><span style="letter-spacing:2.40px">5</span><span style="letter-spacing:0.75px">/</span><span style="letter-spacing:0.00px">1</span><span style="letter-spacing:2.75px">0</span><span style="letter-spacing:2.40px">/</span><span style="letter-spacing:1.65px">2</span><span style="letter-spacing:1.65px">0</span><span style="letter-spacing:1.30px">2</span><span style="letter-spacing:0.00px">2</span></div>
<div class="abs" style="left:425px;top:610.80px;width:15px;height:15px;border-radius:2px;background:#d77ee8"></div>
<div class="t" style="top:613.73px;font-size:10px;line-height:10px;color:#fff;font-weight:bold;left:425.00px;width:15px;text-align:center;">A</div>
<div class="t" style="top:613.09px;font-size:12px;line-height:12px;color:#0c0c0c;letter-spacing:1.05px;left:445.50px;">Insurance for</div>
<div class="t" style="top:630.19px;font-size:12px;line-height:12px;color:#0c0c0c;letter-spacing:1.05px;left:445.50px;">All</div>
<div class="t" style="top:612.19px;font-size:12px;line-height:12px;color:#414862;left:563.80px;"><span style="letter-spacing:1.65px">0</span><span style="letter-spacing:2.40px">5</span><span style="letter-spacing:2.40px">/</span><span style="letter-spacing:1.30px">2</span><span style="letter-spacing:2.40px">5</span><span style="letter-spacing:2.40px">/</span><span style="letter-spacing:1.65px">2</span><span style="letter-spacing:1.65px">0</span><span style="letter-spacing:1.30px">2</span><span style="letter-spacing:0.00px">2</span></div>
<div class="t" style="top:612.19px;font-size:12px;line-height:12px;color:#414862;left:676.20px;"><span style="letter-spacing:1.65px">0</span><span style="letter-spacing:2.40px">5</span><span style="letter-spacing:0.75px">/</span><span style="letter-spacing:0.00px">1</span><span style="letter-spacing:2.75px">0</span><span style="letter-spacing:2.40px">/</span><span style="letter-spacing:1.65px">2</span><span style="letter-spacing:1.65px">0</span><span style="letter-spacing:1.30px">2</span><span style="letter-spacing:0.00px">2</span></div>
<div class="t" style="top:612.19px;font-size:12px;line-height:12px;color:#0c0c0c;left:780.70px;"><span style="letter-spacing:1.05px">5</span><span style="letter-spacing:0.28px">-</span><span style="letter-spacing:0.28px">1</span><span style="letter-spacing:1.05px">0</span><span style="letter-spacing:1.05px">b</span><span style="letter-spacing:1.05px">i</span><span style="letter-spacing:1.05px">l</span><span style="letter-spacing:1.05px">l</span><span style="letter-spacing:1.05px">t</span><span style="letter-spacing:1.05px">o</span><span style="letter-spacing:1.05px">p</span><span style="letter-spacing:1.05px">a</span><span style="letter-spacing:0.28px">r</span><span style="letter-spacing:0.00px">1</span></div>
<div class="t" style="top:612.19px;font-size:12px;line-height:12px;color:#0c0c0c;letter-spacing:1.02px;left:902.50px;">California Testing</div>
<div class="t" style="top:612.19px;font-size:12px;line-height:12px;color:#414862;right:187.60px;text-align:right;"><span style="letter-spacing:1.05px">2</span><span style="letter-spacing:1.05px">7</span><span style="letter-spacing:1.55px">9</span><span style="letter-spacing:1.30px">.</span><span style="letter-spacing:1.05px">7</span><span style="letter-spacing:0.00px">5</span></div>
<div class="t" style="top:612.19px;font-size:12px;line-height:12px;color:#414862;right:116.80px;text-align:right;"><span style="letter-spacing:1.05px">2</span><span style="letter-spacing:1.05px">7</span><span style="letter-spacing:1.55px">9</span><span style="letter-spacing:1.30px">.</span><span style="letter-spacing:1.05px">7</span><span style="letter-spacing:0.00px">5</span></div>
<div class="t" style="top:612.19px;font-size:12px;line-height:12px;color:#414862;right:26.60px;text-align:right;"><span style="letter-spacing:1.90px">0</span><span style="letter-spacing:1.90px">.</span><span style="letter-spacing:2.00px">0</span><span style="letter-spacing:0.00px">0</span></div>
<div class="abs" style="left:1279px;top:66px;width:7px;height:597px;background:linear-gradient(90deg,rgba(0,0,0,0),rgba(0,0,0,0.06))"></div>
</body></html>
